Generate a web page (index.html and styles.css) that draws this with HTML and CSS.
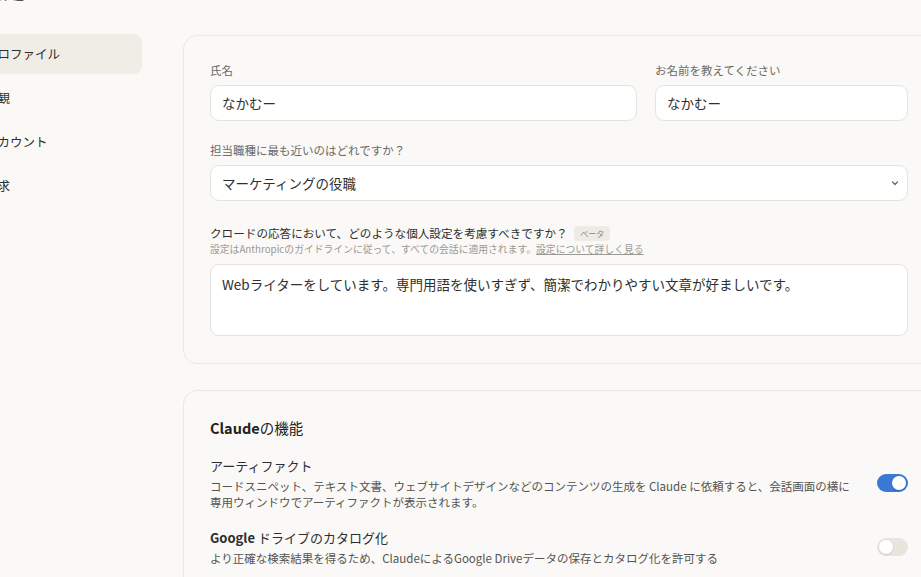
FILE: index.html
```html
<!DOCTYPE html>
<html lang="ja">
<head>
  <meta charset="UTF-8" />
  <meta name="viewport" content="width=device-width, initial-scale=1.0"/>
  <title>設定 - プロファイル</title>
  <link rel="stylesheet" href="styles.css">
</head>
<body>
  <div class="page">
    <h1 class="page-title">設定</h1>

    <div class="layout">
      <nav class="sidebar">
        <a class="nav-item active" href="#">プロファイル</a>
        <a class="nav-item" href="#">外観</a>
        <a class="nav-item" href="#">アカウント</a>
        <a class="nav-item" href="#">請求</a>
      </nav>

      <main class="content">
        <section class="card">
          <div class="field-row">
            <div class="form-group">
              <label for="fullName">氏名</label>
              <input type="text" id="fullName" value="なかむー" />
            </div>
            <div class="form-group">
              <label for="nickname">お名前を教えてください</label>
              <input type="text" id="nickname" value="なかむー" />
            </div>
          </div>

          <div class="form-group">
            <label for="role">担当職種に最も近いのはどれですか？</label>
            <div class="select-wrap">
              <select id="role">
                <option>マーケティングの役職</option>
                <option>エンジニアリングの役職</option>
                <option>デザインの役職</option>
              </select>
              <svg class="chevron" width="10" height="10" viewBox="0 0 10 10" aria-hidden="true">
                <path d="M2.5 4 L5 6.5 L7.5 4" fill="none" stroke="#666" stroke-width="1.2" stroke-linecap="round" stroke-linejoin="round"/>
              </svg>
            </div>
          </div>

          <div class="form-group">
            <label for="prefs" class="question">クロードの応答において、どのような個人設定を考慮すべきですか？ <span class="badge">ベータ</span></label>
            <p class="hint">設定はAnthropicのガイドラインに従って、すべての会話に適用されます。<a href="#">設定について詳しく見る</a></p>
            <textarea id="prefs">Webライターをしています。専門用語を使いすぎず、簡潔でわかりやすい文章が好ましいです。</textarea>
          </div>
        </section>

        <section class="card features">
          <h2><b>Claude</b>の機能</h2>

          <div class="feature">
            <div class="feature-text">
              <h3>アーティファクト</h3>
              <p>コードスニペット、テキスト文書、ウェブサイトデザインなどのコンテンツの生成を Claude に依頼すると、会話画面の横に専用ウィンドウでアーティファクトが表示されます。</p>
            </div>
            <button class="toggle on" aria-pressed="true"><span></span></button>
          </div>

          <div class="feature">
            <div class="feature-text">
              <h3><b>Google</b> ドライブのカタログ化</h3>
              <p>より正確な検索結果を得るため、ClaudeによるGoogle Driveデータの保存とカタログ化を許可する</p>
            </div>
            <button class="toggle" aria-pressed="false"><span></span></button>
          </div>
        </section>
      </main>
    </div>
  </div>
</body>
</html>
```

FILE: styles.css
```css
:root {
  --bg: #faf9f6;
  --card-border: #ebe8e1;
  --field-border: #e6e3dc;
  --nav-active: #f0ede6;
  --text: #2f2f2d;
  --muted: #6b6a66;
  --faint: #9a9893;
  --blue: #3b78d6;
}

* {
  box-sizing: border-box;
  margin: 0;
  padding: 0;
}

body {
  font-family: "Noto Sans CJK JP", "Noto Sans", sans-serif;
  background: var(--bg);
  color: var(--text);
  overflow: hidden;
}

.page {
  margin: -27px 0 0 -27px;
}

.page-title {
  font-size: 22px;
  font-weight: 600;
  line-height: 30px;
  padding-left: 8px;
  margin-bottom: 31px;
}

.layout {
  display: grid;
  grid-template-columns: 169px 752px;
  column-gap: 41px;
  align-items: start;
}

/* left navigation */
.sidebar {
  display: flex;
  flex-direction: column;
  gap: 4px;
}

.nav-item {
  display: block;
  height: 40px;
  line-height: 40px;
  padding: 0 12px;
  border-radius: 8px;
  font-size: 12.5px;
  color: var(--text);
  text-decoration: none;
}

.nav-item.active {
  background: var(--nav-active);
}

/* cards */
.content {
  display: flex;
  flex-direction: column;
  gap: 26px;
  padding-top: 1px;
}

.card {
  background: #faf9f7;
  border: 1px solid var(--card-border);
  border-radius: 14px;
  padding: 26px 26px 27px;
}

.field-row {
  display: grid;
  grid-template-columns: 1fr 253px;
  column-gap: 18px;
}

.form-group {
  margin-bottom: 21px;
}

.form-group:last-child {
  margin-bottom: 0;
}

label {
  display: block;
  font-size: 11.5px;
  line-height: 16px;
  color: var(--muted);
  margin-bottom: 7px;
}

input, select, textarea {
  width: 100%;
  font-family: inherit;
  font-size: 13.5px;
  color: var(--text);
  background: #fff;
  border: 1px solid var(--field-border);
  border-radius: 9px;
  outline: none;
}

input, select {
  height: 36px;
  padding: 0 11px;
}

select {
  appearance: none;
  -webkit-appearance: none;
}

.select-wrap {
  position: relative;
}

.chevron {
  position: absolute;
  right: 8px;
  top: 13px;
}

.question {
  font-size: 11.6px;
  line-height: 18px;
  color: var(--text);
  margin-bottom: 0;
  margin-top: 23px;
}

.badge {
  display: inline-block;
  margin-left: 4px;
  padding: 0 6px;
  height: 15px;
  line-height: 15px;
  font-size: 8px;
  color: #8a8884;
  background: #eeebe4;
  border-radius: 4px;
  vertical-align: 1px;
}

.hint {
  font-size: 9.8px;
  line-height: 14px;
  color: var(--faint);
  margin-bottom: 8px;
}

.hint a {
  color: var(--faint);
}

textarea {
  display: block;
  height: 72px;
  padding: 9px 11px;
  line-height: 20px;
  resize: none;
}

/* feature toggles */
.features {
  padding-top: 26px;
  padding-bottom: 60px;
}

.features h2 {
  font-size: 14.5px;
  font-weight: 400;
  line-height: 22px;
  color: #222;
  margin-bottom: 17px;
}

.features b {
  font-weight: 700;
}

.feature {
  display: flex;
  align-items: center;
  justify-content: space-between;
  gap: 24px;
  margin-bottom: 18px;
}

.feature-text {
  max-width: 640px;
}

.feature h3 {
  font-size: 13px;
  font-weight: 400;
  line-height: 20px;
  color: var(--text);
}

.feature p {
  font-size: 11.5px;
  line-height: 16px;
  color: #55544f;
  margin-top: 2px;
}

.toggle {
  flex: none;
  width: 31px;
  height: 18px;
  border: none;
  border-radius: 9px;
  background: #e8e5de;
  padding: 2px;
  display: flex;
  cursor: pointer;
}

.toggle span {
  width: 14px;
  height: 14px;
  border-radius: 50%;
  background: #fff;
  box-shadow: 0 1px 2px rgba(0, 0, 0, 0.12);
}

.toggle.on {
  background: var(--blue);
  justify-content: flex-end;
}
```
